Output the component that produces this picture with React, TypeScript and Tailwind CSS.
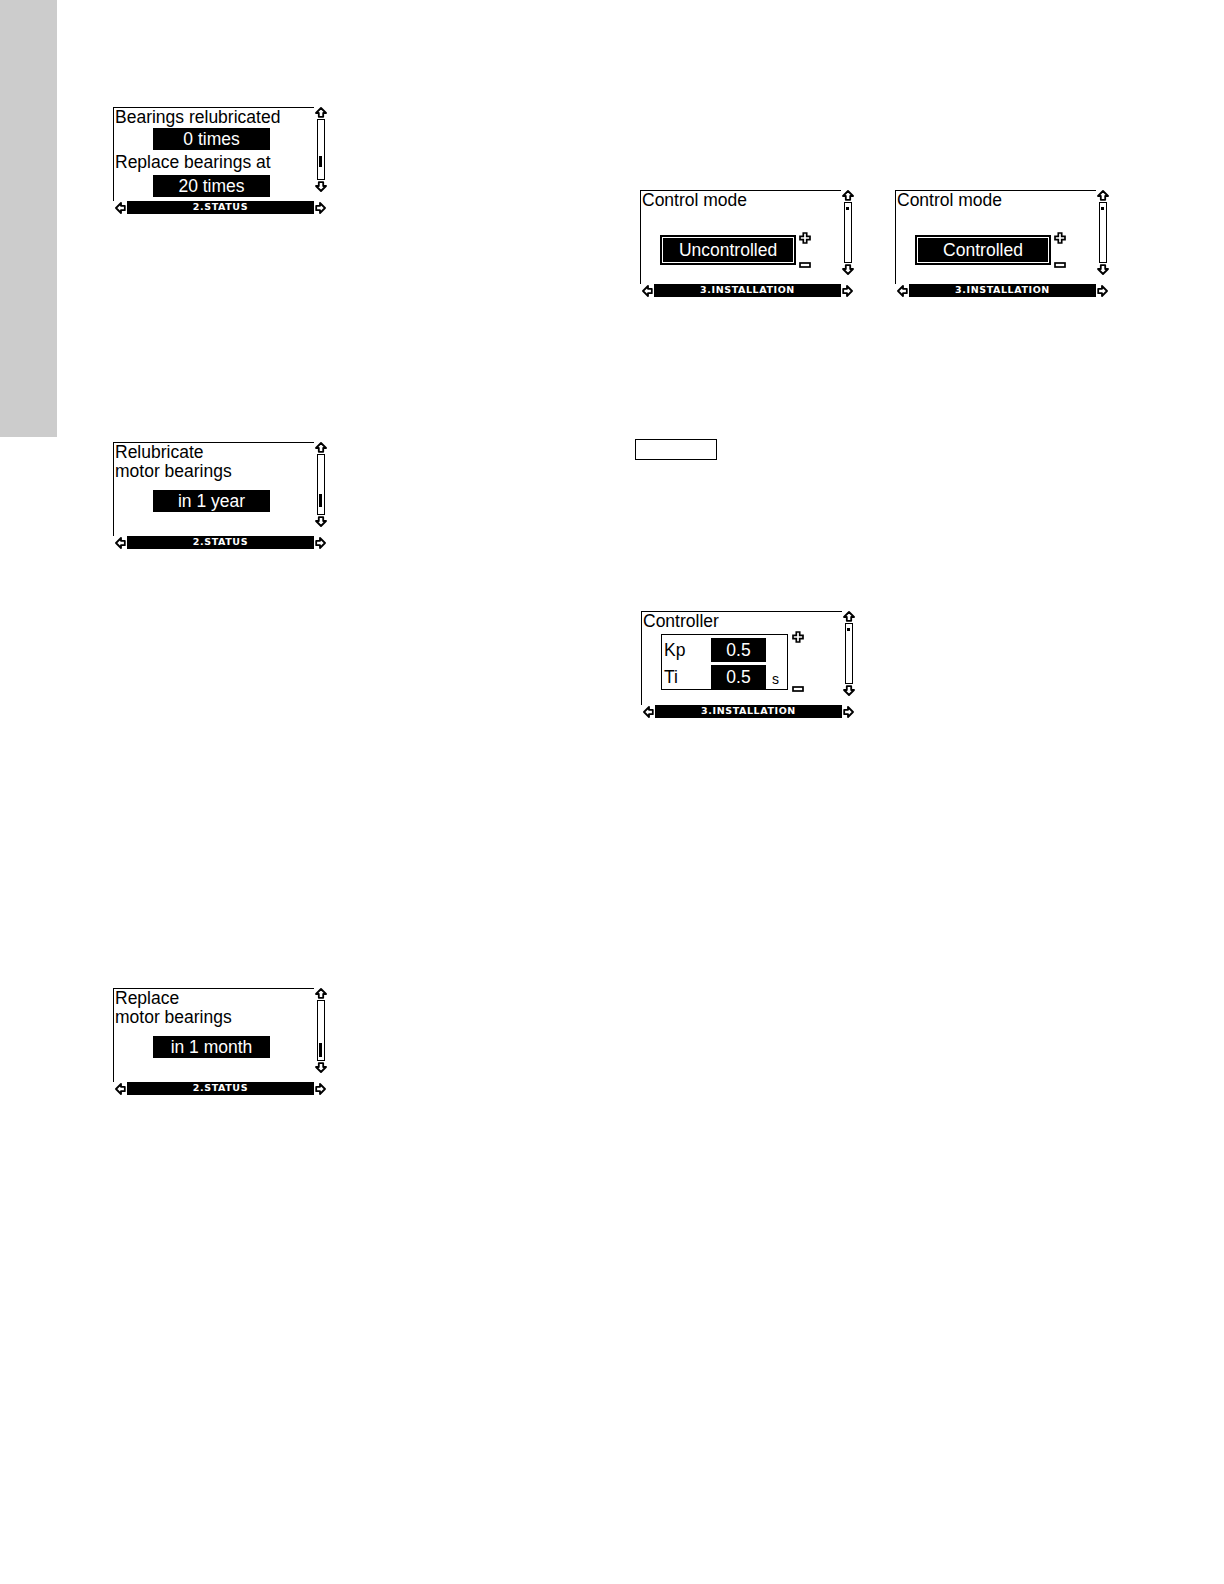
import React from "react";

const font = { fontFamily: '"Liberation Sans", Arial, sans-serif' };

function ArrowUp() {
  return (
    <svg width="12" height="11" viewBox="0 0 12 11">
      <path d="M6 1 L11 6 L8.2 6 L8.2 9.8 L3.8 9.8 L3.8 6 L1 6 Z" fill="white" stroke="black" strokeWidth="1.8" strokeLinejoin="round" />
    </svg>
  );
}

function ArrowDown() {
  return (
    <svg width="12" height="11" viewBox="0 0 12 11">
      <path d="M6 10 L11 5 L8.2 5 L8.2 1.2 L3.8 1.2 L3.8 5 L1 5 Z" fill="white" stroke="black" strokeWidth="1.8" strokeLinejoin="round" />
    </svg>
  );
}

function ArrowLeft() {
  return (
    <svg width="11" height="12" viewBox="0 0 11 12">
      <path d="M1 6 L6 1 L6 3.8 L9.8 3.8 L9.8 8.2 L6 8.2 L6 11 Z" fill="white" stroke="black" strokeWidth="1.8" strokeLinejoin="round" />
    </svg>
  );
}

function ArrowRight() {
  return (
    <svg width="11" height="12" viewBox="0 0 11 12">
      <path d="M10 6 L5 1 L5 3.8 L1.2 3.8 L1.2 8.2 L5 8.2 L5 11 Z" fill="white" stroke="black" strokeWidth="1.8" strokeLinejoin="round" />
    </svg>
  );
}

function Plus() {
  return (
    <svg width="12" height="12" viewBox="0 0 12 12">
      <path d="M4.3 1 H7.7 V4.3 H11 V7.7 H7.7 V11 H4.3 V7.7 H1 V4.3 H4.3 Z" fill="white" stroke="black" strokeWidth="1.7" />
    </svg>
  );
}

function Minus() {
  return (
    <svg width="12" height="6" viewBox="0 0 12 6">
      <rect x="1" y="1" width="10" height="4" fill="white" stroke="black" strokeWidth="1.7" />
    </svg>
  );
}

// LCD frame: text area, scroll bar on the right, menu bar below
function Frame({ children, thumbTop, thumbH, bar }: { children: React.ReactNode; thumbTop: number; thumbH: number; bar: string }) {
  return (
    <div className="flex h-[107px] w-[214px] flex-col text-black" style={font}>
      <div className="flex h-[94px]">
        <div className="w-[201px] border-l border-t border-black">{children}</div>
        <div className="flex w-[13px] flex-col items-center">
          <ArrowUp />
          <div className="relative mt-[1px] h-[61px] w-[8px] border border-black">
            <div className="absolute left-[1.5px] w-[3px] bg-black" style={{ top: thumbTop, height: thumbH }} />
          </div>
          <div className="mt-[1px]">
            <ArrowDown />
          </div>
        </div>
      </div>
      <div className="flex h-[13px] items-center">
        <div className="flex w-[14px] justify-center">
          <ArrowLeft />
        </div>
        <div
          className="flex h-full flex-1 items-center justify-center bg-black text-[9.5px] font-bold tracking-[0.6px] text-white"
          style={{ fontFamily: '"DejaVu Sans", sans-serif' }}
        >
          {bar}
        </div>
        <div className="flex w-[13px] justify-center">
          <ArrowRight />
        </div>
      </div>
    </div>
  );
}

function Value({ children, className = "" }: { children: React.ReactNode; className?: string }) {
  return (
    <div className={`ml-[39px] flex h-[22px] w-[117px] items-center justify-center bg-black text-[17.5px] text-white ${className}`}>
      {children}
    </div>
  );
}

function ControlMode({ value }: { value: string }) {
  return (
    <Frame thumbTop={4} thumbH={3} bar="3.INSTALLATION">
      <p className="pl-[1px] text-[17.5px] leading-[18px]">Control mode</p>
      <div className="ml-[19px] mt-[26px] flex items-start">
        <div className="h-[30px] w-[136px] bg-black p-[2px]">
          <div className="flex h-full items-center justify-center border border-white text-[17.5px] text-white">{value}</div>
        </div>
        <div className="-mt-[3px] ml-[3px] flex h-[36px] flex-col justify-between">
          <Plus />
          <Minus />
        </div>
      </div>
    </Frame>
  );
}

function Controller() {
  return (
    <Frame thumbTop={4} thumbH={3} bar="3.INSTALLATION">
      <p className="pl-[1px] text-[17.5px] leading-[18px]">Controller</p>
      <div className="ml-[19px] mt-[4px] flex items-start">
        <div className="flex h-[56px] w-[127px] flex-col gap-[3px] border border-black pt-[3px]">
          <div className="flex h-[24px] items-center">
            <span className="w-[49px] pl-[2px] text-[17.5px]">Kp</span>
            <div className="flex h-[24px] w-[55px] items-center justify-center bg-black text-[17.5px] text-white">0.5</div>
          </div>
          <div className="flex h-[24px] items-center">
            <span className="w-[49px] pl-[2px] text-[17.5px]">Ti</span>
            <div className="flex h-[24px] w-[55px] items-center justify-center bg-black text-[17.5px] text-white">0.5</div>
            <span className="ml-[6px] self-end text-[14px] leading-[20px]">s</span>
          </div>
        </div>
        <div className="-mt-[3px] ml-[4px] flex h-[61px] flex-col justify-between">
          <Plus />
          <Minus />
        </div>
      </div>
    </Frame>
  );
}

export default function App() {
  return (
    <div className="flex h-[1584px] w-[1224px] bg-white">
      <div className="h-[437px] w-[57px] shrink-0 bg-[#cccccc]" />

      <div className="ml-[56px] flex flex-col pt-[107px]">
        <Frame thumbTop={36} thumbH={11} bar="2.STATUS">
          <p className="pl-[1px] text-[17.5px] leading-[18px]">Bearings relubricated</p>
          <Value className="mt-[2px]">0 times</Value>
          <p className="mt-[3px] pl-[1px] text-[17.5px] leading-[18px]">Replace bearings at</p>
          <Value className="mt-[4px]">20 times</Value>
        </Frame>

        <div className="mt-[228px]">
          <Frame thumbTop={39} thumbH={13} bar="2.STATUS">
            <p className="pl-[1px] text-[17.5px] leading-[19px]">Relubricate</p>
            <p className="pl-[1px] text-[17.5px] leading-[19px]">motor bearings</p>
            <Value className="mt-[9px]">in 1 year</Value>
          </Frame>
        </div>

        <div className="mt-[439px]">
          <Frame thumbTop={42} thumbH={14} bar="2.STATUS">
            <p className="pl-[1px] text-[17.5px] leading-[19px]">Replace</p>
            <p className="pl-[1px] text-[17.5px] leading-[19px]">motor bearings</p>
            <Value className="mt-[9px]">in 1 month</Value>
          </Frame>
        </div>
      </div>

      <div className="ml-[308px] flex flex-col pt-[190px]">
        <div className="flex gap-[41px] pl-[5px]">
          <ControlMode value="Uncontrolled" />
          <ControlMode value="Controlled" />
        </div>

        <div className="mt-[142px] h-[21px] w-[82px] border border-black" />

        <div className="mt-[151px] pl-[6px]">
          <Controller />
        </div>
      </div>
    </div>
  );
}
